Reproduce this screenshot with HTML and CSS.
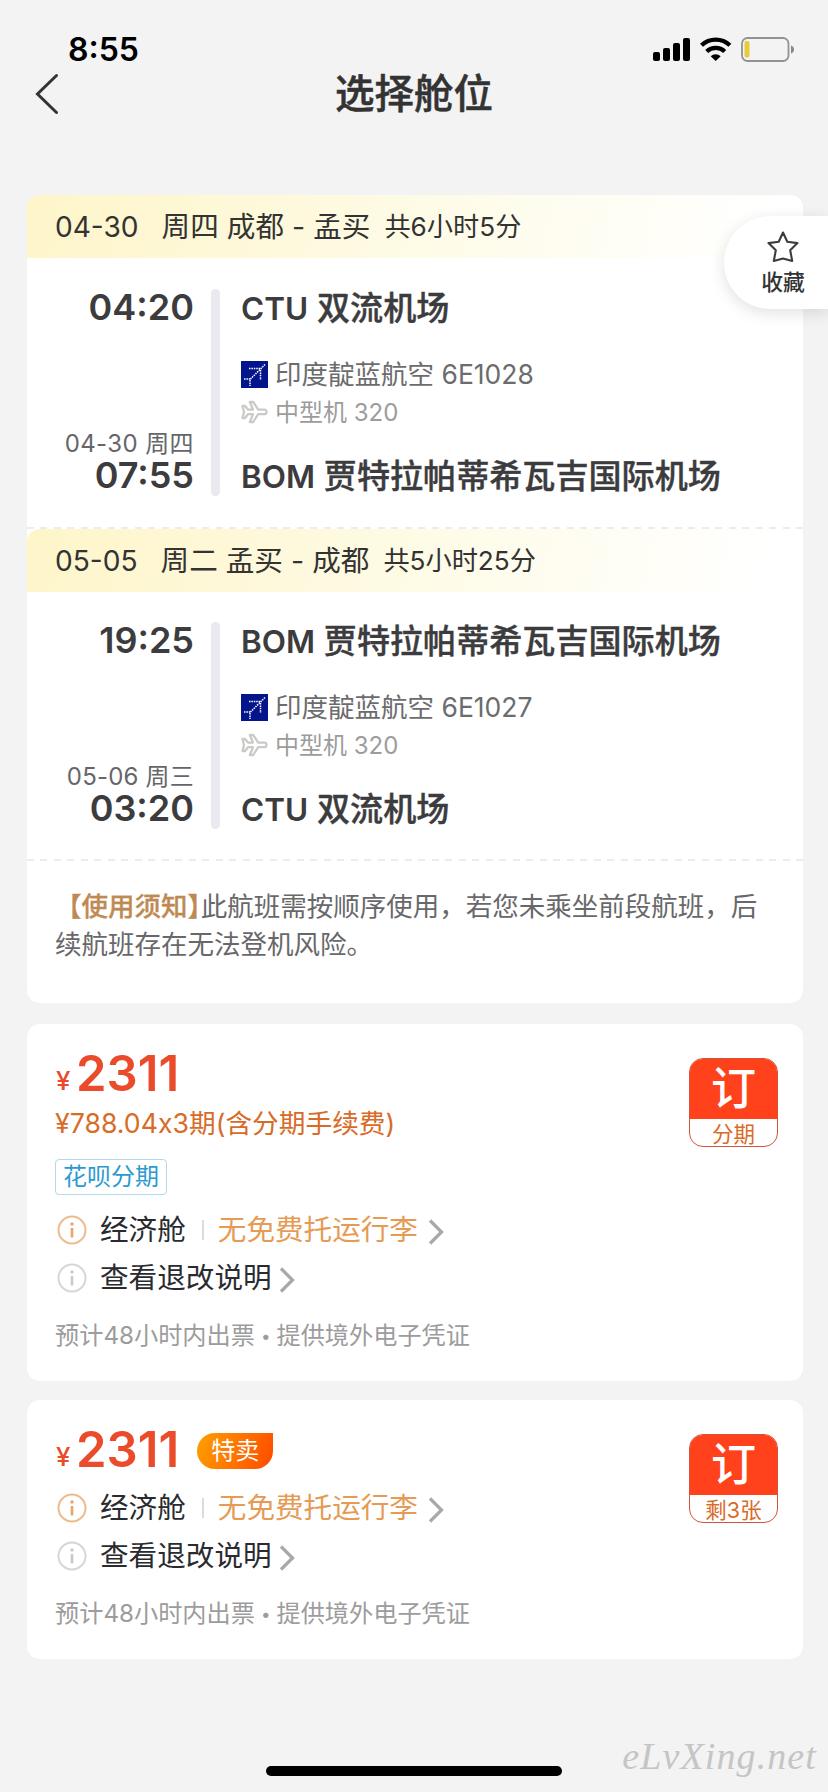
FILE: index.html
```html
<!DOCTYPE html>
<html lang="zh-CN">
<head>
  <meta charset="UTF-8" />
  <meta name="viewport" content="width=device-width, initial-scale=1.0" />
  <title>选择舱位</title>
  <link rel="stylesheet" href="styles.css">
</head>
<body>

  <!-- shared icons -->
  <svg class="sprite" aria-hidden="true">
    <symbol id="indigo" viewBox="0 0 27 27">
      <rect width="27" height="27" fill="#03148c" />
      <g fill="none" stroke="#fff" stroke-width="1.5" stroke-dasharray="1.5 .9">
        <path d="M24 3.500L9 18.500" />
        <path d="M8 7.500H20" />
        <path d="M19.500 9V19" />
        <path d="M3 18H9" />
        <path d="M9 19V25" />
      </g>
    </symbol>
    <symbol id="plane" viewBox="0 0 27 24">
      <path d="M1.500 6h2.500l3 3.600h5L8.800 2h3.400l5 7.600h6a2.300 2.300 0 0 1 0 4.600h-6l-5 7.800H8.800l3.200-7.800H7l-3 3.800H1.500l1.500-6z" fill="none" stroke="#c9ccc6" stroke-width="2.300" stroke-linejoin="round" />
    </symbol>
    <symbol id="info" viewBox="0 0 30 30">
      <circle cx="15" cy="15" r="13.500" fill="none" stroke="currentColor" stroke-width="2" opacity=".75" />
      <circle cx="15" cy="9" r="1.700" fill="currentColor" />
      <path d="M15 13v9.500" stroke="currentColor" stroke-width="2.600" />
    </symbol>
    <symbol id="chevron" viewBox="0 0 16 26">
      <path d="M2 1.500L13.500 13L2 24.500" fill="none" stroke="#a9a9a9" stroke-width="3.300" />
    </symbol>
  </svg>

  <!-- STATUS BAR -->
  <div class="status">
    <span class="clock">8:55</span>
    <svg class="status-icons" width="142" height="26" viewBox="0 0 142 26">
      <rect x="0" y="15" width="7" height="9" rx="2" />
      <rect x="10" y="11" width="7" height="13" rx="2" />
      <rect x="20" y="6" width="7" height="18" rx="2" />
      <rect x="30" y="1" width="7" height="23" rx="2" />
      <g fill="none" stroke="#000" stroke-width="4.200">
        <path d="M48.500 8.300a20.500 20.500 0 0 1 28.400 0" />
        <path d="M53.700 14.500a13 13 0 0 1 18 0" />
      </g>
      <path d="M62.700 24l-5-4.800a7.500 7.500 0 0 1 10 0z" />
      <rect x="89" y="1" width="46.500" height="23" rx="5.500" fill="none" stroke="#929292" stroke-width="1.800" />
      <rect x="91.500" y="4" width="5" height="16.500" rx="2" fill="#eac93c" />
      <path d="M138 8.500q3 1.200 3 4t-3 4z" fill="#858585" />
    </svg>
  </div>

  <!-- NAVBAR -->
  <nav class="navbar">
    <svg class="back" width="24" height="42" viewBox="0 0 24 42">
      <path d="M21.500 2.500L2.500 21L21.500 39.500" fill="none" stroke="#333" stroke-width="3" stroke-linecap="round" />
    </svg>
    <h1>选择舱位</h1>
  </nav>

  <div class="favorite">
    <svg width="34" height="34" viewBox="0 0 34 34">
      <path d="M17 2.500l4.300 9.300 10.200 1.300-7.300 7.100 2 10.800-9.200-2.500-9.200 2.500 2-10.800-7.300-7.100 10.200-1.300z" fill="none" stroke="#3c3c3c" stroke-width="2.100" stroke-linejoin="round" />
    </svg>
    <span>收藏</span>
  </div>

  <main>
    <!-- FLIGHTS -->
    <section class="card">
      <div class="trip-head">
        <span class="date">04-30</span><span class="route">周四 成都 - 孟买</span><span class="duration">共6小时5分</span>
      </div>
      <div class="trip">
        <div class="times">
          <b>04:20</b>
          <span>04-30 周四</span>
          <b>07:55</b>
        </div>
        <div class="bar"></div>
        <div class="detail">
          <h2><i>CTU</i> 双流机场</h2>
          <p class="airline"><svg width="27" height="27"><use href="#indigo" /></svg><span>印度靛蓝航空 6E1028</span></p>
          <p class="model"><svg width="27" height="24"><use href="#plane" /></svg><span>中型机 320</span></p>
          <h2><i>BOM</i> 贾特拉帕蒂希瓦吉国际机场</h2>
        </div>
      </div>

      <div class="dashed"></div>
      <div class="trip-head">
        <span class="date">05-05</span><span class="route">周二 孟买 - 成都</span><span class="duration">共5小时25分</span>
      </div>
      <div class="trip return">
        <div class="times">
          <b>19:25</b>
          <span>05-06 周三</span>
          <b>03:20</b>
        </div>
        <div class="bar"></div>
        <div class="detail">
          <h2><i>BOM</i> 贾特拉帕蒂希瓦吉国际机场</h2>
          <p class="airline"><svg width="27" height="27"><use href="#indigo" /></svg><span>印度靛蓝航空 6E1027</span></p>
          <p class="model"><svg width="27" height="24"><use href="#plane" /></svg><span>中型机 320</span></p>
          <h2><i>CTU</i> 双流机场</h2>
        </div>
      </div>

      <div class="dashed"></div>
      <p class="notice"><b>【使用须知<i>】</i></b>此航班需按顺序使用，若您未乘坐前段航班，后续航班存在无法登机风险。</p>
    </section>

    <!-- FARES -->
    <section class="card fare">
      <div class="info">
        <div class="price"><small>¥</small>2311</div>
        <p class="installment">¥788.04x3期(含分期手续费)</p>
        <span class="tag">花呗分期</span>
        <div class="row first">
          <svg class="orange" width="30" height="30"><use href="#info" /></svg>
          <span>经济舱</span><em></em><span class="luggage">无免费托运行李</span>
          <svg class="more" width="16" height="26"><use href="#chevron" /></svg>
        </div>
        <div class="row">
          <svg class="gray" width="30" height="30"><use href="#info" /></svg>
          <span>查看退改说明</span>
          <svg class="more near" width="16" height="26"><use href="#chevron" /></svg>
        </div>
        <p class="ticketing">预计48小时内出票<i>•</i>提供境外电子凭证</p>
      </div>
      <button class="book"><span>订</span><small>分期</small></button>
    </section>

    <section class="card fare">
      <div class="info">
        <div class="price"><small>¥</small>2311<span class="sale">特卖</span></div>
        <div class="row first">
          <svg class="orange" width="30" height="30"><use href="#info" /></svg>
          <span>经济舱</span><em></em><span class="luggage">无免费托运行李</span>
          <svg class="more" width="16" height="26"><use href="#chevron" /></svg>
        </div>
        <div class="row">
          <svg class="gray" width="30" height="30"><use href="#info" /></svg>
          <span>查看退改说明</span>
          <svg class="more near" width="16" height="26"><use href="#chevron" /></svg>
        </div>
        <p class="ticketing">预计48小时内出票<i>•</i>提供境外电子凭证</p>
      </div>
      <button class="book"><span>订</span><small>剩3张</small></button>
    </section>
  </main>

  <div class="home-bar"></div>
  <div class="watermark">eLvXing.net</div>

</body>
</html>
```
FILE: styles.css
```css
/* Global Styles */
* { box-sizing: border-box; margin: 0; padding: 0; }

body {
  position: relative;
  width: 828px;
  height: 1792px;
  overflow: hidden;
  background-color: #f3f3f3;
  font-family: Inter, 'Noto Sans CJK SC', sans-serif;
  color: #333;
}

svg { display: block; flex: none; }
i { font-style: normal; }
.sprite { display: none; }

/* Status bar */
.status {
  display: flex;
  justify-content: space-between;
  height: 70px;
  padding: 37px 33px 0 68px;
}

.clock {
  font-size: 32px;
  font-weight: 600;
  line-height: 26px;
  color: #000;
}

/* Navbar */
.navbar {
  display: flex;
  align-items: center;
  height: 47px;
  padding: 0 35px;
}

.navbar h1 {
  flex: 1;
  margin-right: 24px;
  text-align: center;
  font-size: 39.5px;
  font-weight: 500;
  line-height: 46px;
  -webkit-text-stroke: 0.5px #333;
}

/* Favorite button floating over the first card */
.favorite {
  position: absolute;
  top: 216px;
  right: 0;
  width: 104px;
  height: 93px;
  padding: 14px 0 0 14px;
  display: flex;
  flex-direction: column;
  align-items: center;
  background-color: #fff;
  border-radius: 47px 0 0 47px;
  box-shadow: 0 4px 16px rgba(0, 0, 0, 0.12);
  font-size: 21.8px;
  font-weight: 500;
  line-height: 37px;
}

main {
  display: flex;
  flex-direction: column;
  padding: 78px 25px 0 27px;
}

.card {
  background-color: #fff;
  border-radius: 13px;
}

/* Flights */
.trip-head {
  display: flex;
  height: 63px;
  padding-left: 28px;
  border-radius: 13px 13px 0 0;
  background: linear-gradient(100deg, #fef5c9, #fefbe6 50%, #fff 95%);
  font-size: 28.6px;
  line-height: 64px;
  white-space: nowrap;
}

.date { margin-right: 23px; font-size: 28.1px; }
.duration { margin-left: 14px; font-size: 26.2px; line-height: 63px; }

.trip {
  display: flex;
  height: 268px;
  margin-bottom: 1px;
  padding: 31px 0 30px;
}

.return {
  height: 267px;
  margin-bottom: 0;
  padding-top: 30px;
}

.return .times span { letter-spacing: 0.2px; }

.times {
  width: 167px;
  display: flex;
  flex-direction: column;
  align-items: flex-end;
  color: #3c3c3e;
}

.times b {
  font-size: 36px;
  font-weight: 600;
  line-height: 36px;
}

.times span {
  margin-top: 105px;
  font-size: 24px;
  letter-spacing: 0.4px;
  line-height: 27px;
  color: #66666a;
}

.bar {
  width: 9px;
  margin: 0 21px 0 17px;
  border-radius: 5px;
  background-color: #e9eaef;
}

.detail h2 {
  font-size: 33.1px;
  font-weight: 500;
  line-height: 39px;
  color: #3c3c3e;
  white-space: nowrap;
  -webkit-text-stroke: 0.4px #3c3c3e;
}

.detail h2 i {
  font-size: 31.5px;
  font-weight: 600;
  -webkit-text-stroke: 0;
}

.detail p {
  display: flex;
  align-items: center;
  gap: 7px;
  height: 37px;
}

.detail .airline { margin-top: 28px; font-size: 26.5px; color: #6c6c6e; }
.detail .model { margin-bottom: 27px; font-size: 24px; color: #9c9c9c; }
.airline span { padding-bottom: 4px; }
.model span { padding-bottom: 2px; }

.dashed {
  height: 2px;
  background: repeating-linear-gradient(90deg, #ececec 0 7px, #fff 7px 13.500px);
}

.notice {
  height: 142px;
  padding: 26px 28px 0;
  font-size: 26.5px;
  line-height: 38px;
  color: #68686a;
}

.notice b {
  font-weight: 500;
  color: #bf8a52;
  -webkit-text-stroke: 0.3px #bf8a52;
}

/* half-width closing bracket */
.notice i { font-feature-settings: "halt"; }

/* Fares */
.fare {
  display: flex;
  justify-content: space-between;
  height: 357px;
  margin-top: 21px;
  padding: 24px 25px 0 28px;
}

.fare + .fare { height: 259px; margin-top: 19px; }

.price {
  display: flex;
  height: 51px;
  font-size: 49px;
  font-weight: 600;
  line-height: 52px;
  color: #ea4b2a;
}

.price small {
  width: 21px;
  padding: 7px 0 0 1px;
  font-size: 26px;
  font-weight: 500;
}

.sale {
  width: 76px;
  height: 36px;
  margin: 9px 0 0 18px;
  border-radius: 18px 0 18px 18px;
  background: linear-gradient(110deg, #ffa000, #ff4a00);
  color: #fff;
  font-size: 24px;
  font-weight: 400;
  line-height: 35px;
  text-align: center;
}

.installment {
  font-size: 26.7px;
  font-feature-settings: "calt" 0;
  line-height: 49px;
  color: #d96b28;
}

.tag {
  display: block;
  width: 112px;
  height: 36px;
  margin: 11px 0;
  border: 1px solid #b3daea;
  border-radius: 4px;
  color: #2b9bd0;
  font-size: 24px;
  line-height: 33px;
  text-align: center;
}

.row {
  display: flex;
  align-items: center;
  height: 48px;
  padding-left: 2px;
  font-size: 28.6px;
  line-height: 48px;
  color: #2a2b30;
}

.price + .row { margin-top: 9px; }
.row span { margin-left: 13px; }
.row em { width: 2px; height: 20px; margin-left: 16px; background-color: #dcdcdc; }
.row .luggage { margin-left: 14px; color: #e69a54; }
.row .more { margin: 3px 0 0 10px; }
.row .near { margin-left: 7px; }

.orange { color: #e8a467; }
.gray { color: #c6cacb; }

.ticketing {
  margin-top: 14px;
  font-size: 24.2px;
  line-height: 40px;
  color: #9c9c9c;
}

.ticketing i {
  margin: 0 6px;
  font-size: 17px;
  vertical-align: 2px;
  line-height: 1;
}

.book {
  width: 89px;
  height: 89px;
  margin-top: 10px;
  overflow: hidden;
  border: 1px solid #d0533a;
  border-radius: 14px;
  background-color: #fff;
  font-family: inherit;
}

.book span {
  display: block;
  height: 60px;
  background-color: #ff411c;
  color: #fff;
  font-size: 45px;
  font-weight: 500;
  line-height: 59px;
}

.book small {
  display: block;
  font-size: 21.5px;
  line-height: 30px;
  color: #d96b28;
}

/* Bottom */
.home-bar {
  position: absolute;
  left: 266px;
  bottom: 16px;
  width: 296px;
  height: 10px;
  border-radius: 5px;
  background-color: #000;
}

.watermark {
  position: absolute;
  right: 11px;
  bottom: 13px;
  font: italic 38px/46px 'Liberation Serif', serif;
  letter-spacing: 1.1px;
  color: #c5c5c5;
}
```
